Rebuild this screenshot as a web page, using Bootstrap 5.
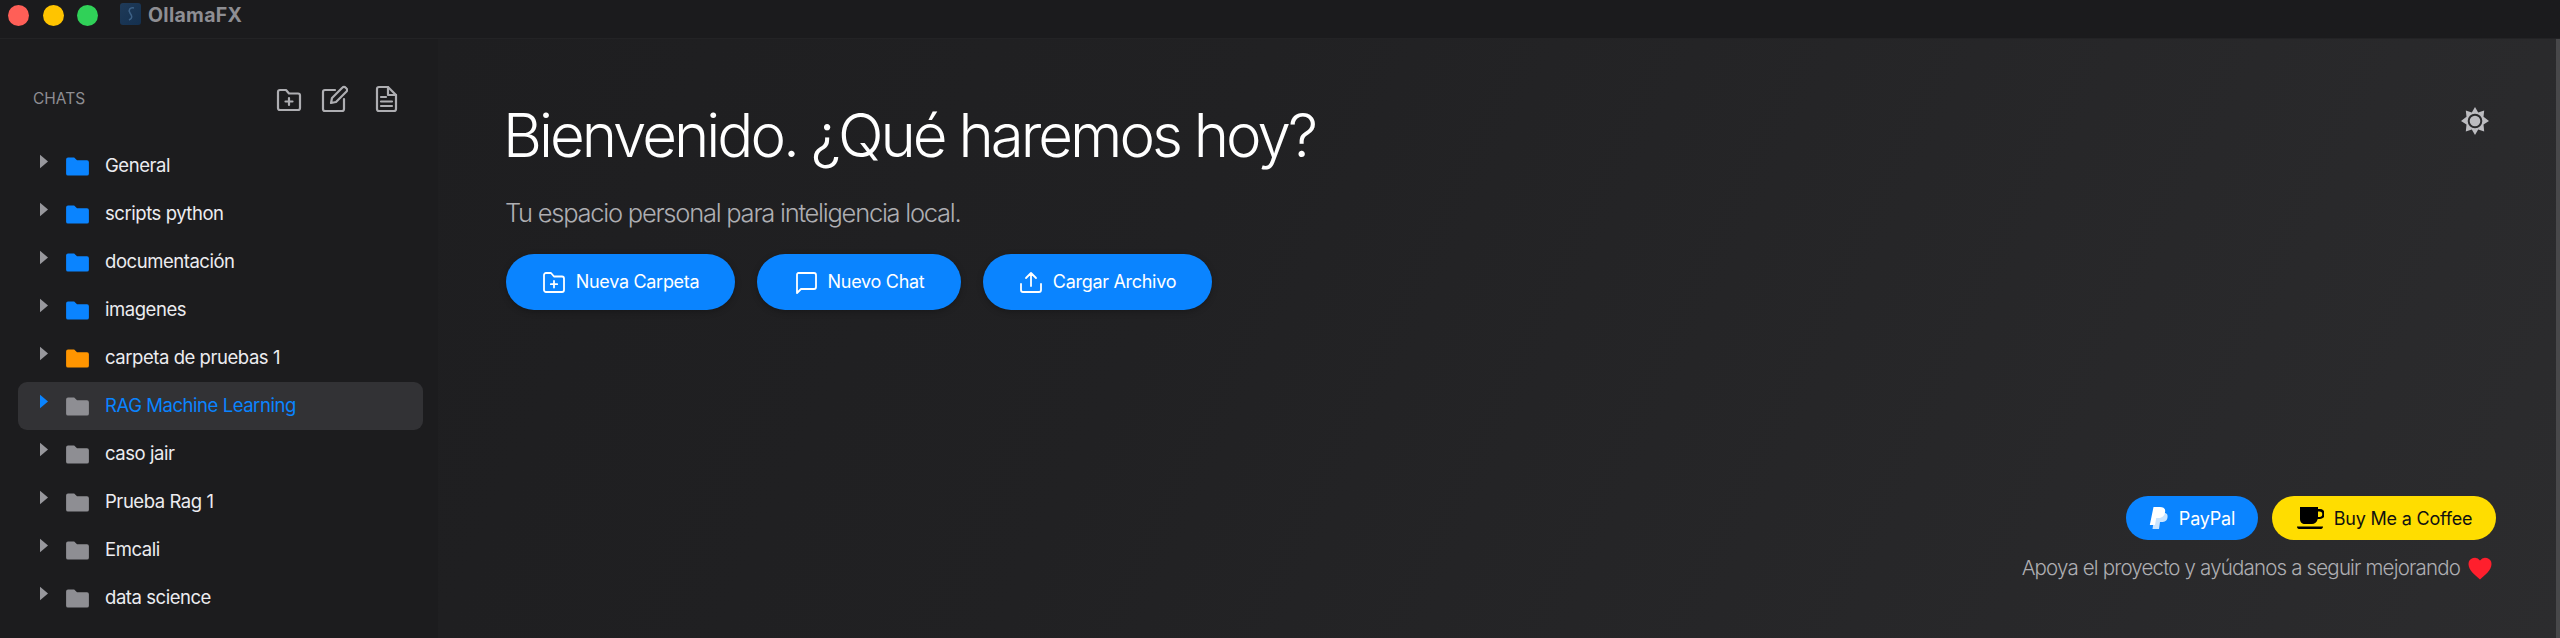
<!DOCTYPE html>
<html lang="es"><head><meta charset="utf-8"><title>OllamaFX</title>
<link href="https://cdn.jsdelivr.net/npm/bootstrap@5.3.0/dist/css/bootstrap.min.css" rel="stylesheet">
<style>
html,body{height:100%;overflow:hidden}
body{background:#1c1c1e;font-family:Inter,"Noto Sans",sans-serif;color:#f2f2f7}
.shell{height:638px}
.titlebar{height:39px;background:#1b1b1d;border-bottom:1px solid #232325;padding-left:8px;gap:13.5px}
.dot{width:21px;height:21px;border-radius:50%;margin-top:-7px}
.appicon{width:21px;height:22px;background:linear-gradient(135deg,#1f3a58,#14304f);border-radius:3px;margin:-11px -6px 0 8px;display:flex}
.appname{font-size:19.5px;font-weight:700;color:#8e8e93;line-height:1;margin-top:-7px;letter-spacing:.3px}
.side{width:438px;flex:none;background:#1c1c1e;padding:0 15px 0 18px}
.sidehead{height:60px;margin-top:30px;padding:0 15px;margin-bottom:13px}
.chatslabel{font-size:15.5px;color:#8e8e93;font-weight:400;width:242px}
.sideicons{gap:17px}
.docicon{margin-left:9px}
.treerow{height:48px;padding-left:22px;border-radius:9px;font-size:18.5px;color:#ececf0;letter-spacing:-.45px}
.treerow.sel{background:#323235;color:#0a84ff}
.caret{width:8px;height:15px;margin-top:-9px;margin-right:18px;flex:none}
.fold{width:23px;height:19px;margin-right:16px;flex:none}
.main{background:linear-gradient(115deg,#1e1e20 0%,#212123 35%,#2c2c2e 100%);padding:0 0 0 68px;border-right:4px solid #48484a}
.h-title{font-size:60px;font-weight:300;color:#fff;line-height:1;margin:0 0 0 -3px;letter-spacing:-3px;padding-top:66px}
.subt{font-size:25.5px;font-weight:300;color:#aeaeb2;margin:33px 0 0 -1px;line-height:1.2;letter-spacing:-1.25px}
.acts{gap:22px;margin-top:25px}
.pillbtn{height:56px;border-radius:28px;background:#0a84ff;color:#fff;border:0;font-size:18px;letter-spacing:-.3px;padding:0;gap:10px;box-shadow:0 2px 6px rgba(0,0,0,.25);justify-content:center}
.pillbtn:hover{background:#0a84ff;color:#fff}
.w1{width:229px}.w2{width:204px}.w3{width:229px}
.gear{position:absolute;top:68px;right:67px}
.support{position:absolute;right:60px;top:457px}
.sbtn{height:44px;border-radius:22px;border:0;font-size:18px;letter-spacing:-.2px;gap:10px;justify-content:center;padding:0}
.pp{width:132px;background:#0a84ff;color:#fff}
.cof{width:224px;background:#ffdd00;color:#111;margin-left:14px}
.sup-text{font-size:20.5px;font-weight:300;color:#aeaeb2;letter-spacing:-.83px;margin-top:13px;margin-right:4px}
</style></head><body>
<div class="shell d-flex flex-column">
<div class="titlebar d-flex align-items-center flex-none">
<span class="dot" style="background:#ff5f57"></span><span class="dot" style="background:#ffc400"></span><span class="dot" style="background:#30d158"></span>
<span class="appicon"><svg width="21" height="22" viewBox="0 0 21 22" fill="none" stroke="#3d6186" stroke-width="1.500"><path d="M14 5c-4-1-6 2-4 5s3 5-1 7"/></svg></span><span class="appname">OllamaFX</span>
</div>
<div class="d-flex flex-grow-1">
<aside class="side">
<div class="sidehead d-flex align-items-center">
<span class="chatslabel">CHATS</span>
<div class="sideicons d-flex">
<svg width="28" height="28" viewBox="0 0 28 28" fill="none" stroke="#aeaeb2" stroke-width="2.2" stroke-linejoin="round" stroke-linecap="round"><path d="M3 7a2 2 0 0 1 2-2h6l3 3.500h9a2 2 0 0 1 2 2V23a2 2 0 0 1-2 2H5a2 2 0 0 1-2-2z"/><path d="M14 13v7M10.500 16.500h7"/></svg>
<svg width="28" height="28" viewBox="0 0 28 28" fill="none" stroke="#aeaeb2" stroke-width="2.2" stroke-linejoin="round" stroke-linecap="round"><path d="M15 5H5a2 2 0 0 0-2 2v17a2 2 0 0 0 2 2h17a2 2 0 0 0 2-2V14"/><path d="M11 18l1-5L22.500 2.500a2 2 0 0 1 3 0l1 1a2 2 0 0 1 0 3L16 17z"/></svg>
<svg class="docicon" width="24" height="28" viewBox="0 0 24 28" fill="none" stroke="#aeaeb2" stroke-width="2.2" stroke-linejoin="round" stroke-linecap="round"><path d="M3 4a2 2 0 0 1 2-2h9l8 8v14a2 2 0 0 1-2 2H5a2 2 0 0 1-2-2z"/><path d="M14 2v8h8M7 12h5M7 16.500h11M7 21h11"/></svg>
</div></div>
<div class="d-flex flex-column" id="tree"></div>
</aside>
<main class="main flex-grow-1 position-relative">
<h1 class="h-title">Bienvenido. ¿Qué haremos hoy?</h1>
<p class="subt">Tu espacio personal para inteligencia local.</p>
<div class="acts d-flex">
<button class="btn pillbtn w1 d-flex align-items-center"><svg width="24" height="24" viewBox="0 0 24 24" fill="none" stroke="#fff" stroke-width="1.8" stroke-linejoin="round" stroke-linecap="round"><path d="M2 5a2 2 0 0 1 2-2h5l3 3.500h8a2 2 0 0 1 2 2V20a2 2 0 0 1-2 2H4a2 2 0 0 1-2-2z"/><path d="M12 11v6.500M8.800 14.200h6.400"/></svg>Nueva Carpeta</button>
<button class="btn pillbtn w2 d-flex align-items-center"><svg width="24" height="24" viewBox="0 0 24 24" fill="none" stroke="#fff" stroke-width="1.8" stroke-linejoin="round" stroke-linecap="round"><path d="M4 3h16a2 2 0 0 1 2 2v12a2 2 0 0 1-2 2H7l-4 4V5a2 2 0 0 1 1-2z"/></svg>Nuevo Chat</button>
<button class="btn pillbtn w3 d-flex align-items-center"><svg width="24" height="24" viewBox="0 0 24 24" fill="none" stroke="#fff" stroke-width="1.8" stroke-linejoin="round" stroke-linecap="round"><path d="M12 16V3M7 8l5-5 5 5M2 14v6a2 2 0 0 0 2 2h16a2 2 0 0 0 2-2v-6"/></svg>Cargar Archivo</button>
</div>
<svg class="gear" width="28" height="28" viewBox="0 0 28 28"><polygon fill="#bcbcc0" points="14,0 17.200,5.500 23.200,3.400 22.500,9.700 28,14 22.500,17.500 23.200,24.600 17.200,22.500 14,28 10.800,22.500 4.800,24.600 5.500,17.500 0,14 5.500,9.700 4.800,3.400 10.800,5.500"/><circle cx="14" cy="14" r="6.300" fill="#bcbcc0" stroke="#2a2a2c" stroke-width="2"/></svg>
<div class="support d-flex flex-column align-items-end">
<div class="d-flex">
<button class="btn sbtn pp d-flex align-items-center"><svg width="20" height="24" viewBox="0 0 20 24"><path fill="#c9e4ff" d="M6 7h9c3 0 4 2 3.500 4.500C18 15 15.500 16 13 16h-2l-1 7H3.500z"/><path fill="#fff" d="M4.500 1H11c4 0 5.800 2 5 5.500C15.300 10.500 12.500 12 9.500 12H7.200L6 19H.8z"/></svg>PayPal</button>
<button class="btn sbtn cof d-flex align-items-center"><svg width="28" height="24" viewBox="0 0 28 24"><path fill="#000" d="M4 1h18v2h2a4 4 0 0 1 0 10h-2.300C21 16.500 18.500 18 16 18H9c-3 0-5-2-5-5zM22 5.500V11h1.500a2.700 2.700 0 0 0 0-5.500zM1 20.500h26c0 1.500-.8 2.500-2 2.500H3c-1.200 0-2-1-2-2.500z"/></svg>Buy Me a Coffee</button>
</div>
<div class="sup-text d-flex align-items-center">Apoya el proyecto y ayúdanos a seguir mejorando<svg class="ms-2" width="24" height="23" viewBox="0 0 24 23"><path fill="#ff1f2d" d="M12 22.500C7 18 .5 13.500.5 7A6.300 6.300 0 0 1 12 3.500 6.300 6.300 0 0 1 23.500 7C23.500 13.500 17 18 12 22.500z"/></svg></div>
</div>
</main>
</div></div>
<script>
var items=[["General","#0a84ff"],["scripts python","#0a84ff"],["documentación","#0a84ff"],["imagenes","#0a84ff"],["carpeta de pruebas 1","#ff9500"],["RAG Machine Learning","#8e8e93",1],["caso jair","#8e8e93"],["Prueba Rag 1","#8e8e93"],["Emcali","#8e8e93"],["data science","#8e8e93"]];
document.getElementById('tree').innerHTML=items.map(function(i){return '<div class="treerow d-flex align-items-center'+(i[2]?' sel':'')+'"><svg class="caret" viewBox="0 0 9 15"><polygon points="0,0 9,7.500 0,15" fill="'+(i[2]?'#0a84ff':'#98989d')+'"/></svg><svg class="fold" viewBox="0 0 24 20"><path fill="'+i[1]+'" d="M0 2.500A2 2 0 0 1 2 .5h6.500l3 3H22a2 2 0 0 1 2 2V17.500a2 2 0 0 1-2 2H2a2 2 0 0 1-2-2z"/></svg><span>'+i[0]+'</span></div>'}).join('');
</script>
<script src="https://cdn.jsdelivr.net/npm/bootstrap@5.3.0/dist/js/bootstrap.bundle.min.js"></script>
</body></html>
